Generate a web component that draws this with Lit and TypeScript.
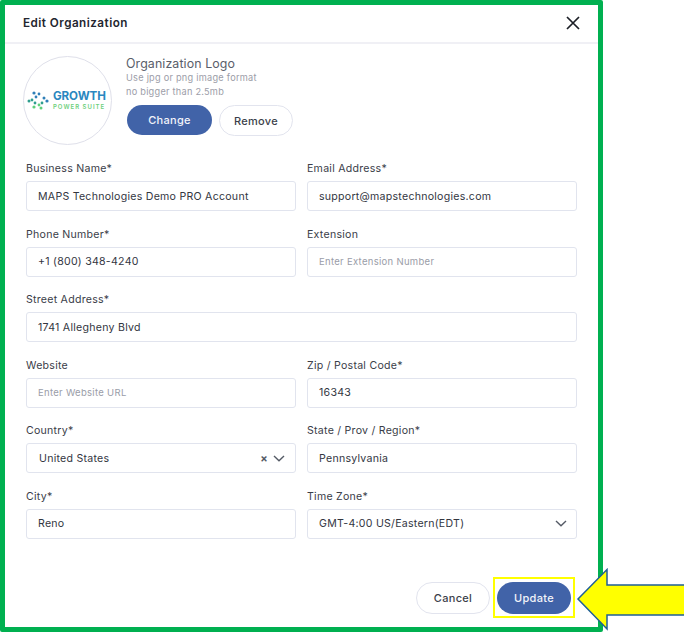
import { LitElement, html, css, svg } from "lit";
import { customElement } from "lit/decorators.js";

const chevron = svg`<svg class="chev" width="12" height="7" viewBox="0 0 12 7"><path d="M1 1l5 4.800L11 1" fill="none" stroke="#555b66" stroke-width="1.4"/></svg>`;

type F = { label: string; value?: string; ph?: string; wide?: boolean; kind?: "country" | "select" };
const fields: F[] = [
  { label: "Business Name*", value: "MAPS Technologies Demo PRO Account" },
  { label: "Email Address*", value: "support@mapstechnologies.com" },
  { label: "Phone Number*", value: "+1 (800) 348-4240" },
  { label: "Extension", ph: "Enter Extension Number" },
  { label: "Street Address*", value: "1741 Allegheny Blvd", wide: true },
  { label: "Website", ph: "Enter Website URL" },
  { label: "Zip / Postal Code*", value: "16343" },
  { label: "Country*", value: "United States", kind: "country" },
  { label: "State / Prov / Region*", value: "Pennsylvania" },
  { label: "City*", value: "Reno" },
  { label: "Time Zone*", value: "GMT-4:00 US/Eastern(EDT)", kind: "select" },
];

@customElement("app-root")
export class AppRoot extends LitElement {
  static styles = css`
    :host { display: block; width: 684px; height: 634px; position: relative; overflow: hidden; background: #fff;
      font-family: Inter, "Open Sans", sans-serif; color: #2f3340; }
    * { box-sizing: border-box; }
    .frame { width: 603px; height: 632px; border: 5px solid #00b050; border-radius: 2px; background: #fff; display: flex; flex-direction: column; }
    .head { height: 39px; flex: none; display: flex; align-items: center; justify-content: space-between; padding: 0 18px 1px 18px; border-bottom: 2px solid #f0f0f5; }
    .title { font-size: 11.7px; font-weight: 600; color: #23262f; letter-spacing: 0.47px; }
    .logo-row { display: flex; padding: 12px 0 0 18px; height: 115px; flex: none; }
    .circle { width: 89px; height: 89px; border: 1.5px solid #dfe0ea; border-radius: 50%; display: flex; align-items: center; gap: 4px; padding-left: 3px; flex: none; }
    .lt { display: flex; flex-direction: column; align-items: stretch; line-height: 1; }
    .g { font-size: 11.6px; font-weight: 700; color: #2a87c0; letter-spacing: -0.1px; }
    .p { font-size: 6px; font-weight: 600; color: #6fd07d; letter-spacing: 1px; margin-top: 1px; white-space: nowrap; }
    .info { margin-left: 14px; display: flex; flex-direction: column; }
    .info h3 { margin: 0; font-size: 12.4px; line-height: 15px; font-weight: 400; color: #5a5e6a; letter-spacing: 0.1px; }
    .info p { margin: 0; font-size: 9.2px; line-height: 13.500px; color: #9c9da8; letter-spacing: 0.25px; }
    .btns { display: flex; gap: 7px; margin-top: 7px; margin-left: 1px; align-items: flex-start; }
    .btn { border-radius: 16px; font-size: 11px; font-weight: 500; letter-spacing: 0.3px; display: flex; align-items: center; justify-content: center; }
    .primary { background: #4163a8; color: #f2f4fa; }
    .ghost { background: #fff; border: 1px solid #e2e4ee; color: #3c3f4a; }
    .change { width: 85px; height: 30px; }
    .remove { width: 74px; height: 31px; }
    .grid { display: grid; grid-template-columns: 270px 270px; column-gap: 11px; row-gap: 13px; padding: 0 0 0 21px; grid-auto-rows: 52.5px; }
    .field { display: flex; flex-direction: column; }
    .wide { grid-column: 1 / 3; }
    label { font-size: 10.6px; line-height: 14px; height: 22px; padding-top: 3px; color: #3a3d48; letter-spacing: 0.25px; }
    .input { height: 30px; border: 1px solid #e1e4ee; border-radius: 3px; background: #fff; display: flex; align-items: center; padding: 0 11px; font-size: 10.6px; color: #33363f; letter-spacing: 0.25px; }
    .input.country { padding-left: 12px; padding-right: 10px; }
    .input.select { padding-right: 9px; }
    .ph { color: #9a9da8; font-size: 9.5px; letter-spacing: 0.3px; }
    .val { flex: 1; }
    .x { font-size: 11px; font-weight: 700; color: #555b66; margin-right: 5px; }
    .chev { flex: none; }
    .foot { margin-top: auto; display: flex; justify-content: flex-end; gap: 7px; padding: 0 27px 13px 0; }
    .cancel, .update { width: 74px; height: 32px; }
    .mark { position: absolute; left: 493px; top: 577px; width: 82px; height: 41px; border: 2px solid #ffff00; }
    .arrow { position: absolute; left: 575px; top: 566px; }
  `;

  private field(f: F) {
    return html`<div class="field ${f.wide ? "wide" : ""}">
      <label>${f.label}</label>
      <div class="input ${f.kind ?? ""}">
        ${f.value
          ? html`<span class="val">${f.value}</span>`
          : html`<span class="val ph">${f.ph}</span>`}
        ${f.kind === "country" ? html`<span class="x">×</span>` : ""}
        ${f.kind ? chevron : ""}
      </div>
    </div>`;
  }

  render() {
    return html`
      <div class="frame">
        <div class="head">
          <span class="title">Edit Organization</span>
          <svg width="14" height="14" viewBox="0 0 14 14"><path d="M1 1l12 12M13 1L1 13" stroke="#1c1f26" stroke-width="1.7" fill="none"/></svg>
        </div>
        <div class="logo-row">
          <div class="circle">
            <svg width="22" height="19" viewBox="0 0 22 19">
              <g fill="#2f7fb8"><circle cx="7" cy="2" r="1.6"/><circle cx="12" cy="3" r="1.4"/><circle cx="9" cy="6" r="1.4"/><circle cx="17" cy="7" r="1.5"/><circle cx="20" cy="10" r="1.6"/></g>
              <g fill="#2f9e8e"><circle cx="2" cy="10" r="1.5"/><circle cx="5" cy="9" r="1.4"/><circle cx="8" cy="12" r="1.4"/><circle cx="15" cy="12" r="1.4"/></g>
              <g fill="#5fcf7a"><circle cx="7" cy="16" r="1.6"/><circle cx="12" cy="14" r="1.4"/><circle cx="14" cy="17" r="1.5"/></g>
            </svg>
            <div class="lt"><span class="g">GROWTH</span><span class="p">POWER SUITE</span></div>
          </div>
          <div class="info">
            <h3>Organization Logo</h3>
            <p>Use jpg or png image format</p>
            <p>no bigger than 2.5mb</p>
            <div class="btns">
              <div class="btn primary change">Change</div>
              <div class="btn ghost remove">Remove</div>
            </div>
          </div>
        </div>
        <div class="grid">${fields.map((f) => this.field(f))}</div>
        <div class="foot">
          <div class="btn ghost cancel">Cancel</div>
          <div class="btn primary update">Update</div>
        </div>
      </div>
      <div class="mark"></div>
      <svg class="arrow" width="109" height="66" viewBox="0 0 109 66">
        <path d="M3 33L32 3.500V19H112V49H32V63z" fill="#ffff00" stroke="#1f5f96" stroke-width="1.5"/>
      </svg>
    `;
  }
}
